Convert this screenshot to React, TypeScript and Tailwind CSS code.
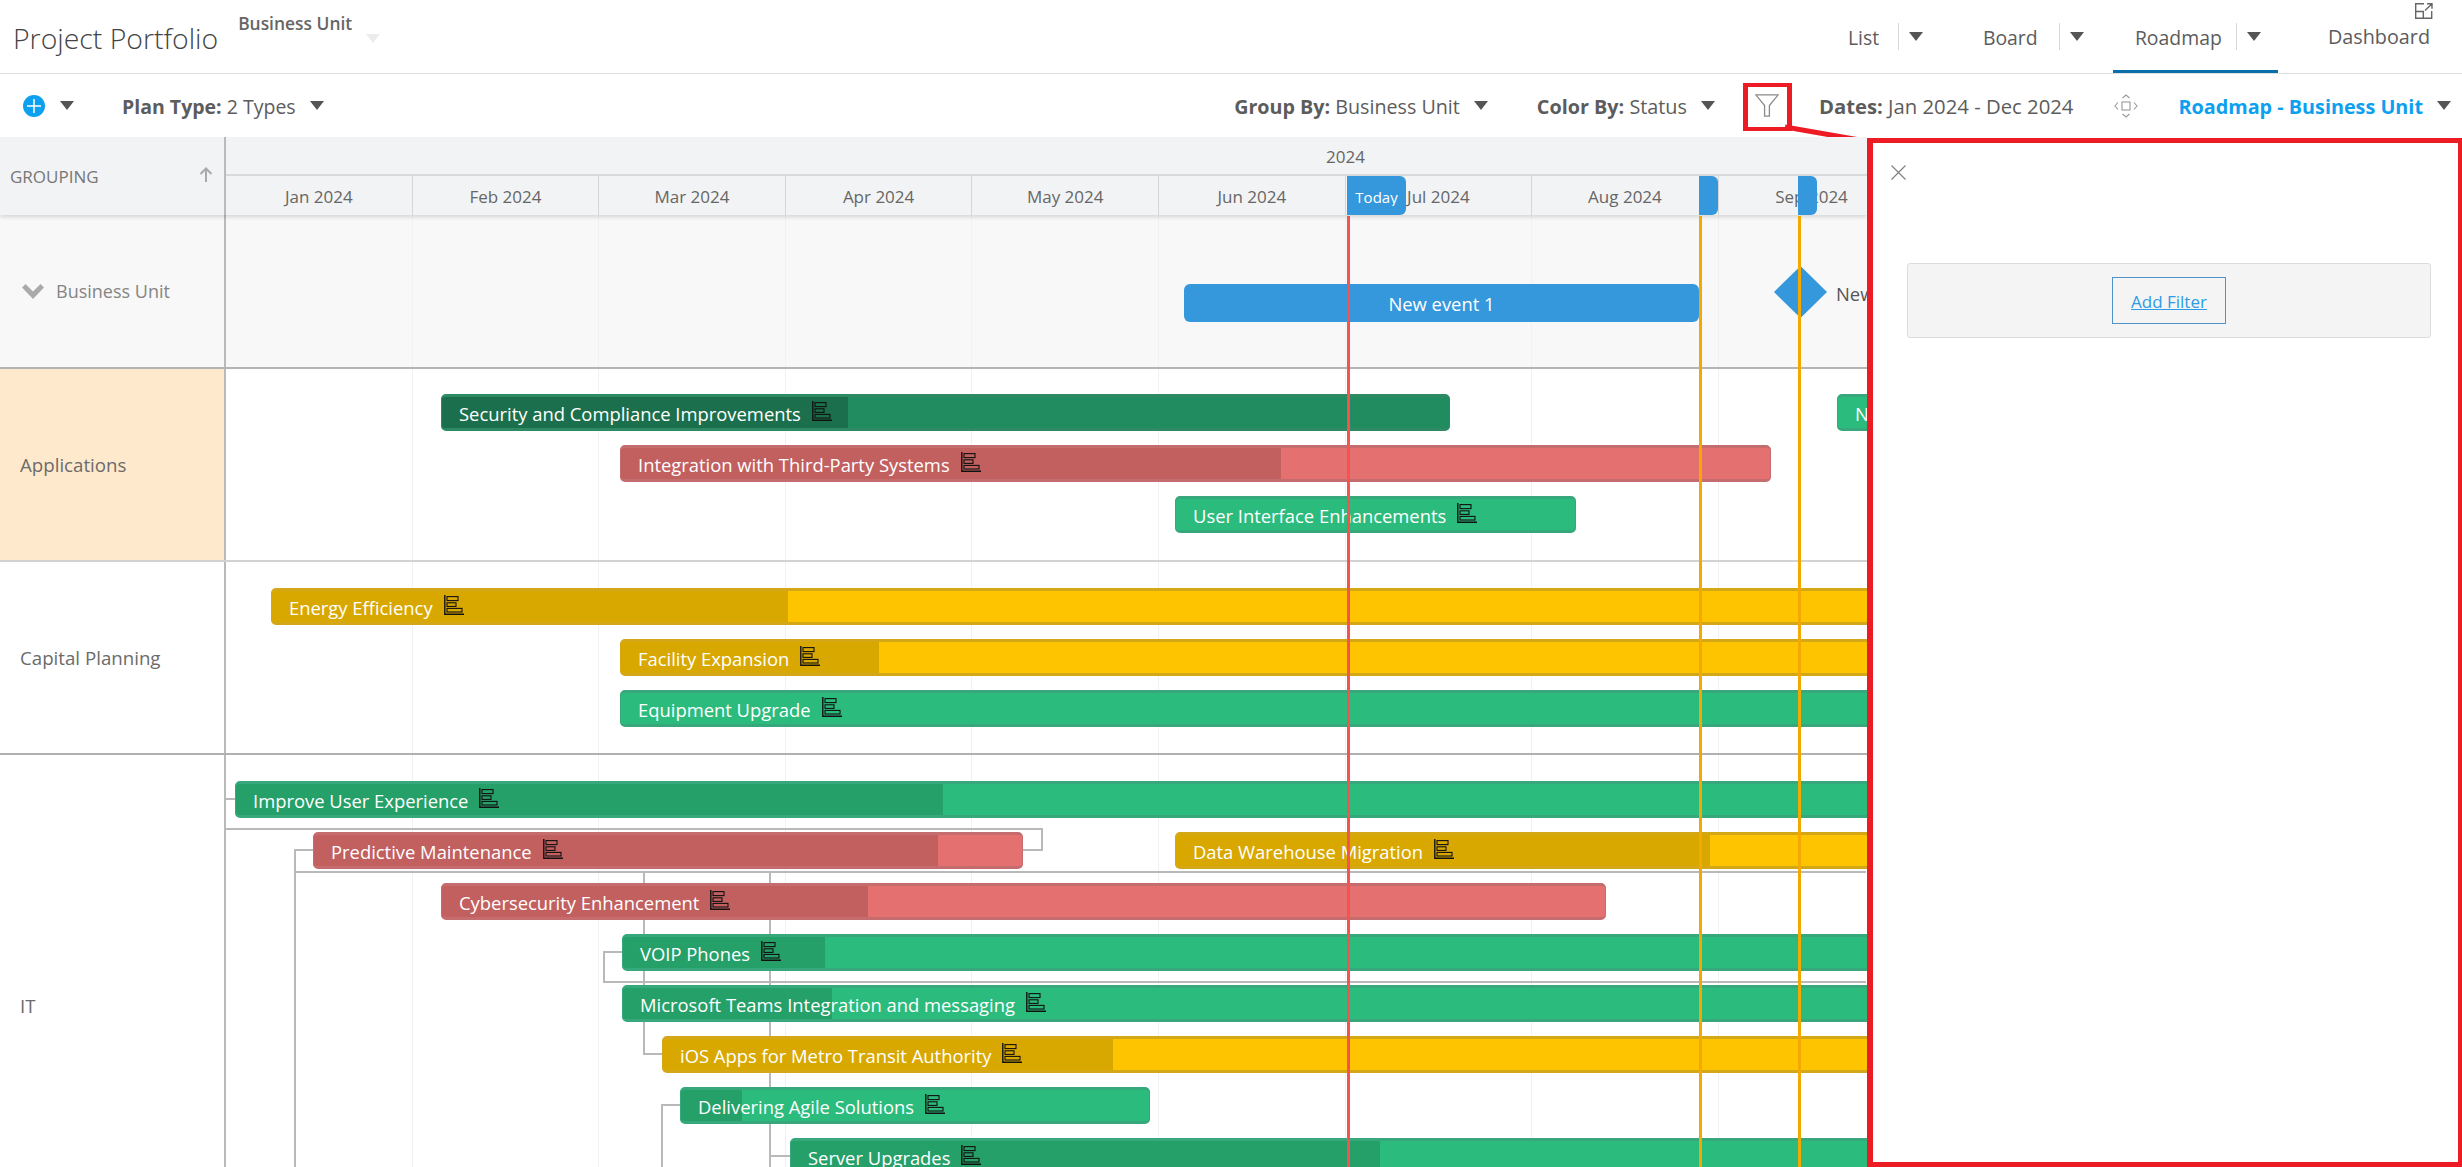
import React from 'react';

type Status = 'green' | 'red' | 'yellow' | 'dark';

interface BarData {
  name: string;
  left: number;
  right: number;
  done: number;
  top: number;
  status: Status;
  icon?: boolean;
}

const ORIGIN = 226;
const months = ['Jan 2024', 'Feb 2024', 'Mar 2024', 'Apr 2024', 'May 2024', 'Jun 2024', 'Jul 2024', 'Aug 2024', 'Sep 2024', 'Oct 2024'];

const barStyles: Record<Status, { bar: string; done: string }> = {
  green: { bar: 'bg-[#2bbb7c] border-[#37a87b]', done: 'bg-[#25a069]' },
  red: { bar: 'bg-[#e57070] border-[#c56c6e]', done: 'bg-[#c25f5f]' },
  yellow: { bar: 'bg-[#ffc400] border-[#d4a716]', done: 'bg-[#d9a800]' },
  dark: { bar: 'bg-[#218c60] border-[#2e8a63]', done: 'bg-[#1c6f4c]' },
};

const applications: BarData[] = [
  { name: 'Security and Compliance Improvements', left: 441, right: 1450, done: 847, top: 25, status: 'dark', icon: true },
  { name: 'New Initiative', left: 1837, right: 2000, done: 1837, top: 25, status: 'green' },
  { name: 'Integration with Third-Party Systems', left: 620, right: 1771, done: 1280, top: 76, status: 'red', icon: true },
  { name: 'User Interface Enhancements', left: 1175, right: 1576, done: 1175, top: 127, status: 'green', icon: true },
];

const capital: BarData[] = [
  { name: 'Energy Efficiency', left: 271, right: 2000, done: 787, top: 26, status: 'yellow', icon: true },
  { name: 'Facility Expansion', left: 620, right: 2000, done: 878, top: 77, status: 'yellow', icon: true },
  { name: 'Equipment Upgrade', left: 620, right: 2000, done: 620, top: 128, status: 'green', icon: true },
];

const it: BarData[] = [
  { name: 'Improve User Experience', left: 235, right: 2000, done: 942, top: 26, status: 'green', icon: true },
  { name: 'Predictive Maintenance', left: 313, right: 1023, done: 937, top: 77, status: 'red', icon: true },
  { name: 'Data Warehouse Migration', left: 1175, right: 2000, done: 1709, top: 77, status: 'yellow', icon: true },
  { name: 'Cybersecurity Enhancement', left: 441, right: 1606, done: 867, top: 128, status: 'red', icon: true },
  { name: 'VOIP Phones', left: 622, right: 2000, done: 824, top: 179, status: 'green', icon: true },
  { name: 'Microsoft Teams Integration and messaging', left: 622, right: 2000, done: 831, top: 230, status: 'green', icon: true },
  { name: 'iOS Apps for Metro Transit Authority', left: 662, right: 2000, done: 1112, top: 281, status: 'yellow', icon: true },
  { name: 'Delivering Agile Solutions', left: 680, right: 1150, done: 741, top: 332, status: 'green', icon: true },
  { name: 'Server Upgrades', left: 790, right: 2000, done: 1379, top: 383, status: 'green', icon: true },
];

const Caret = ({ className = '' }: { className?: string }) => (
  <svg width="14" height="9" viewBox="0 0 14 9" className={className}>
    <path d="M0 0h14L7 9z" fill="currentColor" />
  </svg>
);

const GanttIcon = () => (
  <svg width="20" height="20" viewBox="0 0 20 20" fill="none" stroke="#111" strokeWidth="1.100" className="ml-[11px] shrink-0 -mt-[3px]">
    <path d="M.8 0v19.300H20" strokeWidth="1.400" />
    <rect x="3" y="1.600" width="11" height="4" />
    <rect x="3" y="7.800" width="9" height="3.600" />
    <rect x="3" y="13.400" width="15" height="3.600" />
  </svg>
);

const Bar = ({ bar }: { bar: BarData }) => {
  const s = barStyles[bar.status];
  return (
    <div
      className={`absolute h-[37px] rounded-[5px] border-y-[3px] border-x overflow-hidden flex items-center pl-[17px] ${s.bar}`}
      style={{ left: bar.left - ORIGIN, top: bar.top, width: bar.right - bar.left }}
    >
      {bar.done > bar.left && <div className={`absolute inset-y-0 left-0 ${s.done}`} style={{ width: bar.done - bar.left }} />}
      <span className="relative text-white text-[18.400px] leading-none whitespace-nowrap pt-[4px]">{bar.name}</span>
      {bar.icon && (
        <span className="relative flex">
          <GanttIcon />
        </span>
      )}
    </div>
  );
};

const GridLines = () => (
  <div className="absolute inset-0 flex">
    {months.map((m) => (
      <div key={m} className="h-full w-[186.600px] shrink-0 border-r border-[#f1f1f1]" />
    ))}
  </div>
);

const Row = ({ label, rowClass, cellClass, children }: { label: string; rowClass: string; cellClass: string; children: React.ReactNode }) => (
  <div className={`flex shrink-0 ${rowClass}`}>
    <div className={`w-[226px] shrink-0 flex items-center pl-5 pt-[2px] border-r-2 border-[#bababa] text-[18.700px] text-[#6b6b6b] ${cellClass}`}>{label}</div>
    <div className="relative flex-1">
      <GridLines />
      {children}
    </div>
  </div>
);

const Marker = ({ x, line, width, children }: { x: number; line: string; width: number; children?: React.ReactNode }) => (
  <div className="absolute z-20 top-[39px] bottom-0" style={{ left: x }}>
    <div className="absolute left-0 top-0 h-[39px] bg-[#3597dc] rounded-r-[6px] flex items-center justify-center overflow-hidden" style={{ width }}>
      {children}
    </div>
    <div className={`absolute left-0 top-[40px] bottom-0 ${line}`} />
  </div>
);

const Tab = ({ label, textWidth, pad, active }: { label: string; textWidth: string; pad: string; active?: boolean }) => (
  <div className={`relative h-full flex items-center pl-[22px] ${pad}`}>
    <span className={`text-[19.400px] text-[#5c5c5c] pt-[3px] ${textWidth}`}>{label}</span>
    <span className="w-px h-[27px] bg-[#d8d8d8]" />
    <span className="w-[34px] flex justify-center text-[#555] pb-px">
      <Caret />
    </span>
    {active && <span className="absolute left-0 right-0 bottom-0 h-[3px] bg-[#0a6fa8]" />}
  </div>
);

export default function App() {
  return (
    <div className="relative w-[2462px] h-[1167px] overflow-hidden bg-white flex flex-col font-['Open_Sans',sans-serif] text-[#5c5c5c]">
      {/* Top bar */}
      <header className="h-[74px] shrink-0 flex justify-between border-b border-[#dfdfdf]">
        <div className="flex pl-[13px]">
          <h1 className="text-[28.400px] font-light text-[#444] pt-[17px] leading-[42px]">Project Portfolio</h1>
          <div className="ml-5 pt-[12px]">
            <div className="text-[17.400px] font-semibold text-[#666] leading-[22px]">Business Unit</div>
          </div>
          <Caret className="ml-[14px] mt-[34px] text-[#ececec]" />
        </div>
        <div className="flex h-full pr-[32px]">
          <Tab label="List" textWidth="w-[50px]" pad="pr-[28px]" />
          <Tab label="Board" textWidth="w-[76px]" pad="pr-[19px]" />
          <Tab label="Roadmap" textWidth="w-[101px]" pad="pr-[7px]" active />
          <div className="flex items-center ml-[50px] text-[19.800px]">Dashboard</div>
        </div>
      </header>

      {/* Toolbar */}
      <div className="h-[63px] shrink-0 flex items-center text-[19.500px]">
        <span className="ml-[23px] w-[22px] h-[22px] rounded-full bg-[#0ca0f0] text-white flex items-center justify-center">
          <svg width="14" height="14" viewBox="0 0 14 14" stroke="#fff" strokeWidth="1.500">
            <path d="M7 0v14M0 7h14" />
          </svg>
        </span>
        <Caret className="ml-[15px] text-[#555]" />
        <span className="ml-[48px] pt-[2px]">
          <b className="font-bold">Plan Type:</b> 2 Types
        </span>
        <Caret className="ml-[14px] text-[#555]" />

        <div className="ml-auto flex items-center">
          <span className="text-[19.700px] pt-[2px]">
            <b className="font-bold">Group By:</b> Business Unit
          </span>
          <Caret className="ml-[14px] text-[#555]" />
          <span className="ml-[49px] text-[19.800px] pt-[2px]">
            <b className="font-bold">Color By:</b> Status
          </span>
          <Caret className="ml-[14px] text-[#555]" />
          <svg width="24" height="23" viewBox="0 0 24 23" fill="none" stroke="#8a8a8a" strokeWidth="1.300" className="ml-[40px]">
            <path d="M.8.8h22.400l-8.800 10.800v10.600H9.600V11.600z" />
          </svg>
          <span className="ml-[40px] text-[20.300px] pt-[2px]">
            <b className="font-bold">Dates:</b> Jan 2024 - Dec 2024
          </span>
          <svg width="24" height="24" viewBox="0 0 24 24" fill="none" stroke="#999" strokeWidth="1.100" className="ml-[41px]">
            <rect x="8" y="8" width="8" height="8" />
            <path d="M8.500 4 12 1l3.500 3M8.500 20l3.500 3 3.500-3M4 8.500 1 12l3 3.500M20 8.500 23 12l-3 3.500" />
          </svg>
          <span className="ml-[40px] font-bold text-[19.800px] pt-[2px] text-[#0ca0f0]">Roadmap - Business Unit</span>
          <Caret className="ml-[14px] mr-[11px] text-[#555]" />
        </div>
      </div>

      {/* Body */}
      <div className="flex-1 min-h-0 flex">
        <div className="relative w-[1867px] shrink-0 overflow-hidden flex flex-col">
          {/* Timeline header */}
          <div className="relative z-10 h-[78px] shrink-0 flex bg-[#f2f3f5] shadow-[0_2px_4px_rgba(0,0,0,0.14)]">
            <div className="w-[226px] shrink-0 flex items-center justify-between pl-[10px] pr-[11px] pt-[2px] border-r-2 border-[#bababa] text-[17px] text-[#777]">
              <span>GROUPING</span>
              <svg width="14" height="15" viewBox="0 0 14 15" fill="none" stroke="#a9a9a9" strokeWidth="2" className="mb-[6px]">
                <path d="M7 15V1.500M1.500 7 7 1.500 12.500 7" />
              </svg>
            </div>
            <div className="flex-1 min-w-0">
              <div className="h-[39px] w-[2239px] pt-[2px] flex items-center justify-center text-[17px] text-[#666] border-b-2 border-[#d9d9d9]">2024</div>
              <div className="h-[39px] flex">
                {months.map((m) => (
                  <div key={m} className="w-[186.600px] shrink-0 pt-[2px] flex items-center justify-center text-[17px] text-[#666] border-r border-[#d6d6d6]">
                    {m}
                  </div>
                ))}
              </div>
            </div>
          </div>

          {/* Rows */}
          <div className="flex shrink-0 h-[154px] bg-[#f8f8f8] border-b-2 border-[#b4b4b4]">
            <div className="w-[226px] shrink-0 flex items-center border-r-2 border-[#bababa] text-[18px] text-[#858585]">
              <svg width="22" height="15" viewBox="0 0 22 15" fill="#aaa" className="ml-[22px]">
                <path d="M0 3.500 3.500 0 11 7.500 18.500 0 22 3.500 11 15z" />
              </svg>
              <span className="ml-3">Business Unit</span>
            </div>
            <div className="relative flex-1">
              <GridLines />
              <div className="absolute left-[958px] top-[69px] w-[515px] h-[38px] pt-[2px] rounded-[6px] bg-[#3597dc] flex items-center justify-center text-white text-[18.400px]">New event 1</div>
              <svg width="53" height="52" viewBox="0 0 53 52" className="absolute left-[1548px] top-[51px]">
                <path d="M26.500 0 53 26 26.500 52 0 26z" fill="#3597dc" />
              </svg>
              <span className="absolute left-[1610px] top-[65px] text-[18.400px] text-[#555] whitespace-nowrap">New event 2</span>
            </div>
          </div>

          <Row label="Applications" rowClass="h-[193px] border-b-2 border-[#d2d2d2]" cellClass="bg-[#ffe9cc]">
            {applications.map((b) => (
              <Bar key={b.name} bar={b} />
            ))}
          </Row>

          <Row label="Capital Planning" rowClass="h-[193px] border-b-2 border-[#b0b0b0]" cellClass="">
            {capital.map((b) => (
              <Bar key={b.name} bar={b} />
            ))}
          </Row>

          <Row label="IT" rowClass="h-[500px]" cellClass="">
            <svg viewBox="226 755 1640 500" width="1640" height="500" fill="none" stroke="#b9b9b9" strokeWidth="2" className="absolute left-0 top-0">
              <path d="M226 799h9M226 829h816v21h-19M313 850h-18v405M295 872h1572M644 872v182h18M770 872v284h20M770 1156v99M622 952h-18v30h1263M680 1105h-18v150" />
            </svg>
            {it.map((b) => (
              <Bar key={b.name} bar={b} />
            ))}
          </Row>

          {/* Date markers */}
          <Marker x={1347} width={59} line="w-[3px] bg-[#f75252]">
            <span className="block h-[19px] mt-[2px] overflow-hidden text-white text-[15px] leading-[20px]">Today</span>
          </Marker>
          <Marker x={1699} width={19} line="w-[3px] bg-[#f5a800]" />
          <Marker x={1798} width={19} line="w-[3px] bg-[#f5a800]" />
        </div>

        {/* Filter panel */}
        <aside className="flex-1 mt-px border-t-[5px] border-b-[5px] border-l-[6px] border-r-[4px] border-[#ed1c24] bg-white">
          <button className="block ml-[18px] mt-[22px] text-[#808080]">
            <svg width="15" height="15" viewBox="0 0 15 15" stroke="currentColor" strokeWidth="1.200" fill="none">
              <path d="M.5.5l14 14M14.500.5l-14 14" />
            </svg>
          </button>
          <div className="ml-[34px] mr-[27px] mt-[83px] h-[75px] flex items-center justify-center rounded-[3px] border border-[#dcdcdc] bg-[#f4f4f4]">
            <a className="w-[114px] h-[47px] pt-[2px] flex items-center justify-center border border-[#4f93c8] text-[17px] text-[#2e9be6] underline">Add Filter</a>
          </div>
        </aside>
      </div>

      {/* Annotation round the filter button */}
      <div className="absolute left-[1743px] top-[83px] w-[49px] h-[48px] border-x-[5px] border-y-4 border-[#ed1c24]" />
      <svg width="90" height="24" viewBox="0 0 90 24" className="absolute left-[1785px] top-[124px]">
        <path d="M0 3 86 18" stroke="#ed1c24" strokeWidth="5" fill="none" />
      </svg>
      {/* Expand icon */}
      <svg width="18" height="16" viewBox="0 0 18 16" fill="none" stroke="#666" strokeWidth="1.400" className="absolute left-[2415px] top-[3px]">
        <path d="M9 .7H.7v14.600h16V8M.7 8.500h7.600v6.800M10 7.500 17 .7M12 .7h5v5" />
      </svg>
    </div>
  );
}
